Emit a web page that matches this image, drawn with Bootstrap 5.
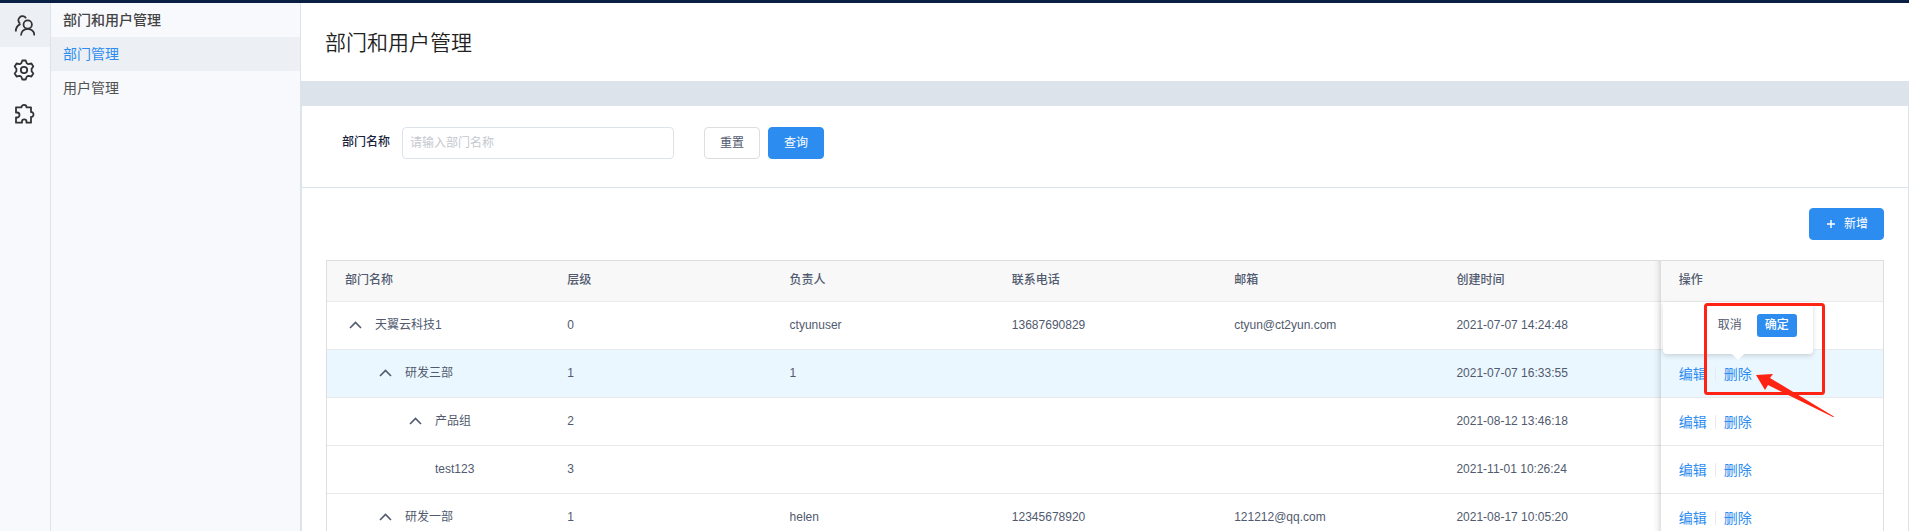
<!DOCTYPE html>
<html lang="zh-CN">
<head>
<meta charset="utf-8">
<meta name="viewport" content="width=device-width, initial-scale=1">
<title>部门和用户管理</title>
<link href="https://cdn.jsdelivr.net/npm/bootstrap@5.3.0/dist/css/bootstrap.min.css" rel="stylesheet">
<style>
  :root { --line: #dce3ea; --brand: #2d8cf0; --ink: #515a6e; }
  body { font: 12px/20px "Liberation Sans", "Noto Sans CJK SC", sans-serif; color: var(--ink); }
  a { text-decoration: none; color: var(--brand); }
  .topline { height: 3px; background: #0a1f44; }
  .rail { width: 51px; background: #f8f9fd; border-right: 1px solid var(--line); }
  .rail a { height: 44px; color: #333; padding: 1px 2px 0 0; }
  .rail a.current, .side a.current { background: #eceff4; }
  .side { width: 250px; background: #f8f9fd; border-right: 1px solid var(--line); font-size: 14px; }
  .side .side-title, .side a { display: block; height: 34px; line-height: 34px; padding: 0 12px; color: #515151; }
  .side .side-title { font-size: 14px; font-weight: 500; margin: 0; color: #444; }
  .side a.current { color: var(--brand); }
  .page-head { height: 78px; padding: 2px 24px 0; }
  .page-head h1 { font-size: 21px; line-height: 32px; font-weight: 350; color: #222; margin: 0; }
  .band { height: 24px; background: var(--line); }
  .panel { border: 1px solid var(--line); }
  .filters { padding: 21px 40px 28px; border-bottom: 1px solid var(--line); }
  .filters label { color: #17233d; font-weight: 500; margin-right: 12px; padding-bottom: 2px; }
  .form-control.name-box { width: 272px; height: 32px; font-size: 12px; border-color: var(--line); border-radius: 4px; padding: 4px 7px; margin-right: 30px; }
  .name-box::placeholder { color: #c5c8ce; }
  .btn.act { height: 32px; font-size: 12px; line-height: 20px; padding: 4px 15px; border-radius: 4px; --bs-btn-bg: var(--brand); --bs-btn-border-color: var(--brand); --bs-btn-color: #fff; }
  .btn.plain { --bs-btn-bg: #fff; --bs-btn-border-color: #dcdee2; --bs-btn-color: var(--ink); }
  .list-area { padding: 20px 24px; }
  .grid-frame { border: 1px solid #dcdee2; }
  .table.depts { table-layout: fixed; margin: 0; color: var(--ink); border-collapse: separate; border-spacing: 0; }
  .depts > :not(caption) > * > * { padding: 0 0 2px 18px; height: 48px; vertical-align: middle; border-bottom: 1px solid #e8eaec; color: inherit; }
  .table.depts th { height: 41px; background: #f8f8f9; font-weight: 500; padding-bottom: 3px; }
  .table.depts .hovered > td { background: #ebf7ff; }
  .table.depts td:last-child, .table.depts th:last-child { position: relative; }
  .table.depts tr > :last-child::before { content: ""; position: absolute; left: -8px; top: 0; bottom: -1px; width: 8px; background: linear-gradient(to left, rgba(0,0,0,.12), rgba(0,0,0,.03) 50%, transparent); }
  .depts .fold { width: 30px; padding: 0 0 0 4px; border: 0; background: none; color: inherit; text-align: left; line-height: 1; }
  .lv1 { padding-left: 30px; } .lv2 { padding-left: 60px; } .lv3 { padding-left: 90px; }
  .ops { font-size: 14px; line-height: 22px; padding-top: 2px; }
  .ops .sep { width: 1px; height: 14px; background: #e8eaec; margin: 0 8px; }
  .confirm-pop { position: absolute; z-index: 2; left: 2px; top: -48px; width: 150px; height: 52px; background: #fff; border-radius: 0 0 4px 4px; box-shadow: 0 2px 5px rgba(0,0,0,.15); padding: 0 16px 5px; font-size: 12px; }
  .confirm-pop::after { content: ""; position: absolute; left: 69px; top: 52px; border: 6px solid transparent; border-top-color: #fff; border-bottom: 0; }
  .confirm-pop button { height: 23px; padding: 0 8px; border: 0; border-radius: 3px; background: none; color: var(--ink); line-height: 23px; }
  .confirm-pop button.yes { background: var(--brand); color: #fff; margin-left: 7px; font-weight: 500; }
  .callout { position: absolute; z-index: 3; left: 42px; top: -48px; width: 132px; height: 117px; pointer-events: none; }
</style>
</head>
<body>
<div class="vh-100 d-flex flex-column overflow-hidden">
  <div class="topline flex-shrink-0"></div>
  <div class="d-flex flex-grow-1">
    <nav class="rail flex-shrink-0" aria-label="主导航">
      <a href="#" class="current d-flex align-items-center justify-content-center" aria-label="用户">
        <svg width="22" height="22" viewBox="0 0 22 22" fill="none" stroke="currentColor" stroke-width="1.8"><circle cx="14.700" cy="9.500" r="4.200"/><path d="M8 20.500c0-4 3-6.700 6.700-6.700s6.700 2.700 6.700 6.700M13 3.200A4.100 4.100 0 1 0 7.200 8.700M2.800 16.500c0-3.500 1.400-6 4.700-7.300"/></svg>
      </a>
      <a href="#" class="d-flex align-items-center justify-content-center" aria-label="设置">
        <svg width="22" height="22" viewBox="0 0 22 22" fill="none" stroke="currentColor" stroke-width="1.8" stroke-linejoin="round"><circle cx="11" cy="11" r="3.200"/><path d="M9.300 1.500h3.400l1 2.700 1.700 1 3-.7 1.900 3-1.700 2.300v2.400l1.700 2.300-1.900 3-3-.7-1.700 1-1 2.700H9.300l-1-2.700-1.700-1-3 .7-1.900-3 1.700-2.300V9.800L1.700 7.500l1.900-3 3 .7 1.700-1z"/></svg>
      </a>
      <a href="#" class="d-flex align-items-center justify-content-center" aria-label="插件">
        <svg width="22" height="22" viewBox="0 0 22 22" fill="none" stroke="currentColor" stroke-width="1.800" stroke-linejoin="round"><path d="M3 4.300H8.500a2.500 2.500 0 1 1 5 0H18v4.700a2.500 2.500 0 1 1 0 5V19.700h-4.500v-1a2.200 2.200 0 0 0-4.500 0v1H3v-5.200h1a2.500 2.500 0 0 0 0-5H3z"/></svg>
      </a>
    </nav>
    <nav class="side flex-shrink-0" aria-label="部门和用户管理">
      <h2 class="side-title">部门和用户管理</h2>
      <a href="#" class="current" aria-current="page">部门管理</a>
      <a href="#">用户管理</a>
    </nav>
    <main class="flex-grow-1 bg-white">
      <header class="page-head d-flex align-items-center"><h1>部门和用户管理</h1></header>
      <div class="band"></div>
      <section class="panel">
        <form class="filters d-flex align-items-center">
          <label for="dept">部门名称</label>
          <input id="dept" class="form-control name-box" type="text" placeholder="请输入部门名称">
          <button type="reset" class="btn act plain me-2">重置</button>
          <button type="button" class="btn act">查询</button>
        </form>
        <div class="list-area">
          <div class="d-flex justify-content-end mb-3 pb-1">
            <button type="button" class="btn act d-flex align-items-center gap-2"><svg width="11" height="12" viewBox="0 0 11 12" stroke="currentColor" stroke-width="1.4"><path d="M6 2v8M2 6h8"/></svg>新增</button>
          </div>
          <div class="grid-frame">
            <table class="table depts">
              <thead><tr><th>部门名称</th><th>层级</th><th>负责人</th><th>联系电话</th><th>邮箱</th><th>创建时间</th><th>操作</th></tr></thead>
              <tbody>
                <tr>
                  <td><div class="d-flex align-items-center"><button class="fold" aria-label="收起"><svg width="13" height="8" viewBox="0 0 13 8" fill="none" stroke="currentColor" stroke-width="1.6"><path d="M1 7l5.500-5.500L12 7"/></svg></button>天翼云科技1</div></td>
                  <td>0</td><td>ctyunuser</td><td>13687690829</td><td>ctyun@ct2yun.com</td><td>2021-07-07 14:24:48</td><td></td>
                </tr>
                <tr class="hovered">
                  <td><div class="d-flex align-items-center lv1"><button class="fold" aria-label="收起"><svg width="13" height="8" viewBox="0 0 13 8" fill="none" stroke="currentColor" stroke-width="1.6"><path d="M1 7l5.500-5.500L12 7"/></svg></button>研发三部</div></td>
                  <td>1</td><td>1</td><td></td><td></td><td>2021-07-07 16:33:55</td>
                  <td>
                    <div class="ops d-flex align-items-center"><a href="#">编辑</a><span class="sep"></span><a href="#">删除</a></div>
                    <div class="confirm-pop d-flex align-items-center justify-content-end"><button type="button">取消</button><button type="button" class="yes">确定</button></div>
                    <svg class="callout" viewBox="0 0 132 117" aria-hidden="true"><rect x="2.500" y="2.500" width="118" height="89" rx="2" fill="none" stroke="#ff2313" stroke-width="3"/><path d="M53 73l17-1-3 4 63 38q2 1 0 1L65 83l-3 5z" fill="#ff2313"/></svg>
                  </td>
                </tr>
                <tr>
                  <td><div class="d-flex align-items-center lv2"><button class="fold" aria-label="收起"><svg width="13" height="8" viewBox="0 0 13 8" fill="none" stroke="currentColor" stroke-width="1.6"><path d="M1 7l5.500-5.500L12 7"/></svg></button>产品组</div></td>
                  <td>2</td><td></td><td></td><td></td><td>2021-08-12 13:46:18</td>
                  <td><div class="ops d-flex align-items-center"><a href="#">编辑</a><span class="sep"></span><a href="#">删除</a></div></td>
                </tr>
                <tr>
                  <td><div class="lv3">test123</div></td>
                  <td>3</td><td></td><td></td><td></td><td>2021-11-01 10:26:24</td>
                  <td><div class="ops d-flex align-items-center"><a href="#">编辑</a><span class="sep"></span><a href="#">删除</a></div></td>
                </tr>
                <tr>
                  <td><div class="d-flex align-items-center lv1"><button class="fold" aria-label="收起"><svg width="13" height="8" viewBox="0 0 13 8" fill="none" stroke="currentColor" stroke-width="1.6"><path d="M1 7l5.500-5.500L12 7"/></svg></button>研发一部</div></td>
                  <td>1</td><td>helen</td><td>12345678920</td><td>121212@qq.com</td><td>2021-08-17 10:05:20</td>
                  <td><div class="ops d-flex align-items-center"><a href="#">编辑</a><span class="sep"></span><a href="#">删除</a></div></td>
                </tr>
              </tbody>
            </table>
          </div>
        </div>
      </section>
    </main>
  </div>
</div>
<script src="https://cdn.jsdelivr.net/npm/bootstrap@5.3.0/dist/js/bootstrap.bundle.min.js"></script>
</body>
</html>
